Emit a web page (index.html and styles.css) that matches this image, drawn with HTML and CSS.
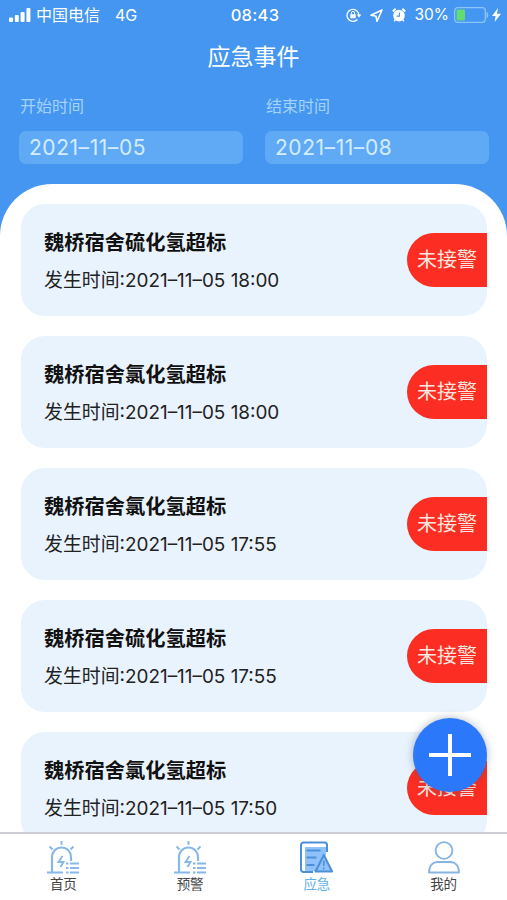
FILE: index.html
```html
<!DOCTYPE html>
<html lang="zh-CN">
<head>
	<meta charset="UTF-8">
	<meta name="viewport" content="width=device-width,user-scalable=no">
	<title>应急事件</title>
<link rel="stylesheet" href="styles.css">
</head>
<body>
	<section class="wrap">
		<header class="header">
			<div class="status">
				<div class="status-left">
					<svg class="signal" viewBox="0 0 22 14" width="22" height="14" fill="#fff">
						<rect x="0" y="9.5" width="4" height="4.5" rx="1"/>
						<rect x="5.8" y="7" width="4" height="7" rx="1"/>
						<rect x="11.6" y="4" width="4" height="10" rx="1"/>
						<rect x="17.4" y="0" width="4" height="14" rx="1"/>
					</svg>
					<span class="carrier">中国电信</span>
					<span>4G</span>
				</div>
				<div class="clock">08:43</div>
				<div class="status-right">
					<svg class="lock" viewBox="0 0 16 14" width="16" height="14" fill="none" stroke="#fff" stroke-width="1.3">
						<path d="M11.5 11.4A6 6 0 1 1 13 7"/>
						<path d="M10.6 6.6h4.8L13 9.6z" fill="#fff" stroke="none"/>
						<rect x="4.3" y="6.3" width="5.4" height="4" fill="#fff" stroke="none"/>
						<path d="M5.4 6.5V5a1.6 1.6 0 0 1 3.2 0v1.5" stroke-width="1"/>
					</svg>
					<svg class="arrow" viewBox="0 0 13 13" width="13" height="13" fill="none" stroke="#fff" stroke-width="1.6" stroke-linejoin="round">
						<path d="M12 1L1 6.300l5 1 1 5z"/>
					</svg>
					<svg class="alarm" viewBox="0 0 14 14" width="14" height="14" fill="none" stroke="#fff">
						<circle cx="7" cy="7.6" r="5.8" fill="#fff" stroke="none"/>
						<path d="M.8 3.400L3.600.8M13.200 3.400L10.400.8" stroke-width="2"/>
						<path d="M3.400 11.400L2.200 13.400M10.600 11.400l1.200 2" stroke-width="1.400"/>
						<path d="M7.400 4.500v3.600H4.600" stroke="#4496f0" stroke-width="1.100"/>
					</svg>
					<span class="percent">30%</span>
					<svg class="battery" viewBox="0 0 35 16" width="35" height="16">
						<rect x=".7" y=".7" width="30.6" height="14.6" rx="3" fill="none" stroke="#8cc3fa" stroke-width="1.3"/>
						<rect x="2.6" y="2.6" width="8.4" height="10.8" rx="1" fill="#63dd71"/>
						<path d="M33 5.5q1.8 2.500 0 5z" fill="#8cc3fa" stroke="#8cc3fa"/>
					</svg>
					<svg class="bolt" viewBox="0 0 9 14" width="9" height="14">
						<path d="M6 0L0 8h3.600L2.600 14 9 5.700H5z" fill="#fff"/>
					</svg>
				</div>
			</div>
			<h1 class="title">应急事件</h1>
			<div class="filter">
				<div class="field">
					<label>开始时间</label>
					<div class="date">2021–11–05</div>
				</div>
				<div class="field">
					<label>结束时间</label>
					<div class="date">2021–11–08</div>
				</div>
			</div>
		</header>
		<ul class="list">
			<li>
				<div class="info">
					<h2>魏桥宿舍硫化氢超标</h2>
					<p>发生时间:<span>2021–11–05 18:00</span></p>
				</div>
				<span class="tag">未接警</span>
			</li>
			<li>
				<div class="info">
					<h2>魏桥宿舍氯化氢超标</h2>
					<p>发生时间:<span>2021–11–05 18:00</span></p>
				</div>
				<span class="tag">未接警</span>
			</li>
			<li>
				<div class="info">
					<h2>魏桥宿舍氯化氢超标</h2>
					<p>发生时间:<span>2021–11–05 17:55</span></p>
				</div>
				<span class="tag">未接警</span>
			</li>
			<li>
				<div class="info">
					<h2>魏桥宿舍硫化氢超标</h2>
					<p>发生时间:<span>2021–11–05 17:55</span></p>
				</div>
				<span class="tag">未接警</span>
			</li>
			<li>
				<div class="info">
					<h2>魏桥宿舍氯化氢超标</h2>
					<p>发生时间:<span>2021–11–05 17:50</span></p>
				</div>
				<span class="tag">未接警</span>
			</li>
		</ul>
		<nav class="nav">
			<a href="javascript:;">
				<svg viewBox="0 0 32 33" width="32" height="33" fill="none" stroke="#86b8ea" stroke-width="2.200">
					<path d="M5 31V16a9.500 9.500 0 0 1 19 0v4M0 31.500h16"/>
					<path d="M14.500 0v4M2.500 5.500l3 3M26.500 5.500l-3 3" stroke-width="1.900"/>
					<path d="M15.500 15l-4 6h5l-3 5" stroke-width="1.900"/>
					<path d="M19 22.500h2.500M23 22.500h9M19 27h2.500M23 27h9M19 31.500h2.500M23 31.500h9"/>
				</svg>
				<span>首页</span>
			</a>
			<a href="javascript:;">
				<svg viewBox="0 0 32 33" width="32" height="33" fill="none" stroke="#86b8ea" stroke-width="2.200">
					<path d="M5 31V16a9.500 9.500 0 0 1 19 0v4M0 31.500h16"/>
					<path d="M14.500 0v4M2.500 5.500l3 3M26.500 5.500l-3 3" stroke-width="1.900"/>
					<path d="M15.500 15l-4 6h5l-3 5" stroke-width="1.900"/>
					<path d="M19 22.500h2.500M23 22.500h9M19 27h2.500M23 27h9M19 31.500h2.500M23 31.500h9"/>
				</svg>
				<span>预警</span>
			</a>
			<a href="javascript:;" class="active">
				<svg viewBox="0 0 33 33" width="33" height="33" fill="none" stroke="#4a8fd8" stroke-width="2" stroke-linejoin="round">
					<path d="M5 6h21v8l-9 16H5z" fill="#8fc2fa" stroke="none"/>
					<path d="M27 11V4a2.500 2.500 0 0 0-2.500-2.500h-21A2.500 2.500 0 0 0 1 4v24.500A2.500 2.500 0 0 0 3.500 31H13"/>
					<path d="M6.500 9.500h14M6.500 16.500h10M6.500 24h8" stroke-width="1.900"/>
					<path d="M23.800 14L15.500 30.500h16.600z" fill="#8fc2fa"/>
					<path d="M23.800 19.500v5.500M23.800 26.500v2" stroke-width="1.500"/>
				</svg>
				<span>应急</span>
			</a>
			<a href="javascript:;">
				<svg viewBox="0 0 32 33" width="32" height="33" fill="none" stroke="#86b5e3" stroke-width="1.900" stroke-linejoin="round">
					<circle cx="16" cy="9.500" r="8.400"/>
					<path d="M1 31.500C1 24.500 5 21 10 21h12c5 0 9 3.500 9 10.500z"/>
				</svg>
				<span>我的</span>
			</a>
		</nav>
		<a href="javascript:;" class="add">
			<svg viewBox="0 0 42 42" width="42" height="42" stroke="#fff" stroke-width="4">
				<path d="M21 0v42M0 21h42"/>
			</svg>
		</a>
	</section>
</body>
</html>
```

FILE: styles.css
```css
html,body{
	margin: 0;
	overflow: hidden;
}
body{
	font-family: Inter,"Noto Sans CJK SC",sans-serif;
	background: #fff;
}
h1,h2,p,ul{
	margin: 0;
	padding: 0;
}
a{
	text-decoration: none;
}
svg{
	display: block;
	flex: none;
}
.wrap{
	height: 900px;
	display: flex;
	flex-direction: column;
	position: relative;
	overflow: hidden;
}
.header{
	height: 246px;
	flex: none;
	background: #4496f0;
	color: #fff;
}
.status{
	height: 30px;
	display: grid;
	grid-template-columns: 1fr auto 1fr;
	align-items: center;
	padding: 0 6px 0 9px;
	font-size: 16px;
	line-height: 30px;
}
.status-left,.status-right{
	display: flex;
	align-items: center;
}
.status-right{
	justify-content: flex-end;
}
.carrier{
	margin: 0 15px 0 5px;
}
.clock{
	font-size: 16.500px;
	font-weight: 500;
	letter-spacing: .3px;
}
.arrow{
	margin: 0 9px 0 8px;
}
.alarm{
	margin-right: 8px;
}
.percent{
	font-size: 15.500px;
}
.battery{
	margin: 0 3px 0 5px;
}
.title{
	font-size: 23px;
	font-weight: 400;
	line-height: 54px;
	text-align: center;
}
.filter{
	display: grid;
	grid-template-columns: 1fr 1fr;
	gap: 22px;
	padding: 10px 18px 0 19px;
}
.field label{
	display: block;
	padding-left: 1px;
	font-size: 16px;
	line-height: 24px;
	color: #a5d2fb;
}
.date{
	height: 33px;
	margin-top: 13px;
	padding-left: 10px;
	border-radius: 7px;
	background: #60aaf5;
	font-size: 21px;
	letter-spacing: .55px;
	line-height: 33px;
	color: #d3ecff;
}
.list{
	flex: 1;
	min-height: 0;
	margin-top: -62px;
	padding: 20px 20px 0 21px;
	border-radius: 52px 52px 0 0;
	background: #fff;
	list-style: none;
	overflow: hidden;
}
.list li{
	display: flex;
	justify-content: space-between;
	align-items: center;
	height: 112px;
	margin-bottom: 20px;
	border-radius: 24px;
	background: #e9f3fd;
}
.info{
	padding: 3px 0 0 23px;
	color: #111;
}
.info h2{
	font-size: 20.250px;
	font-weight: 700;
	line-height: 38px;
}
.info p{
	font-size: 18.900px;
	line-height: 38px;
	color: #222;
}
.tag{
	width: 80px;
	height: 54px;
	box-sizing: border-box;
	padding-left: 10px;
	border-radius: 27px 0 0 27px;
	background: #fc2d22;
	color: #ffe5df;
	font-size: 20px;
	line-height: 54px;
}
.nav{
	height: 66px;
	flex: none;
	display: grid;
	grid-template-columns: repeat(4,1fr);
	border-top: 2px solid #cdcfd5;
	background: #fff;
}
.nav a{
	display: flex;
	flex-direction: column;
	align-items: center;
	padding-top: 7px;
	font-size: 13.500px;
	line-height: 20px;
	color: #444;
}
.nav .active{
	color: #5eb3e8;
}
.add{
	width: 74px;
	height: 74px;
	position: absolute;
	right: 20px;
	bottom: 108px;
	display: flex;
	justify-content: center;
	align-items: center;
	border-radius: 50%;
	background: #2b79fa;
	box-shadow: 0 0 8px rgba(60,80,110,.4);
}
```
